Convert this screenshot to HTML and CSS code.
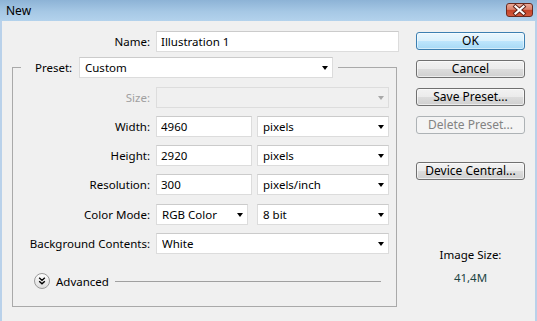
FILE: index.html
```html
<!DOCTYPE html>
<html lang="en">
<head>
    <meta charset="UTF-8">
    <meta name="viewport" content="width=device-width, initial-scale=1.0">
    <title>New</title>
    <link rel="stylesheet" href="styles.css">
</head>
<body>

    <div class="window">
        <div class="titlebar">
            <span class="title">New</span>
            <span class="close">
                <svg width="25" height="12" viewBox="0 0 25 12">
                    <path d="M8.5 2.5 L16.5 9.5 M16.5 2.5 L8.5 9.5" stroke="#5b2218" stroke-width="4" stroke-linecap="square"/>
                    <path d="M8.5 2.5 L16.5 9.5 M16.5 2.5 L8.5 9.5" stroke="#ffffff" stroke-width="2.2" stroke-linecap="square"/>
                </svg>
            </span>
        </div>

        <div class="client">
            <!-- Left side: name + document settings -->
            <div class="main">
                <div class="row name-row">
                    <label class="lbl">Name:</label>
                    <input type="text" class="field w-name" value="Illustration 1">
                </div>

                <fieldset class="group">
                    <legend class="preset">
                        <label class="preset-lbl">Preset:</label>
                        <span class="combo w-preset"><select><option>Custom</option></select></span>
                    </legend>

                    <div class="rows">
                        <div class="row">
                            <label class="lbl disabled">Size:</label>
                            <span class="combo off w-full"><select disabled><option></option></select></span>
                        </div>
                        <div class="row">
                            <label class="lbl">Width:</label>
                            <input type="text" class="field w-num" value="4960">
                            <span class="combo w-unit"><select><option>pixels</option></select></span>
                        </div>
                        <div class="row">
                            <label class="lbl">Height:</label>
                            <input type="text" class="field w-num" value="2920">
                            <span class="combo w-unit"><select><option>pixels</option></select></span>
                        </div>
                        <div class="row">
                            <label class="lbl">Resolution:</label>
                            <input type="text" class="field w-num" value="300">
                            <span class="combo w-unit"><select><option>pixels/inch</option></select></span>
                        </div>
                        <div class="row row-mode">
                            <label class="lbl">Color Mode:</label>
                            <span class="combo w-mode"><select><option>RGB Color</option></select></span>
                            <span class="combo w-unit"><select><option>8 bit</option></select></span>
                        </div>
                        <div class="row">
                            <label class="lbl">Background Contents:</label>
                            <span class="combo w-full"><select><option>White</option></select></span>
                        </div>
                    </div>

                    <div class="advanced">
                        <svg class="adv-icon" width="16" height="16" viewBox="0 0 16 16">
                            <defs>
                                <linearGradient id="advBg" x1="0" y1="0" x2="0" y2="1">
                                    <stop offset="0" stop-color="#ffffff"/>
                                    <stop offset="1" stop-color="#dcdcdc"/>
                                </linearGradient>
                            </defs>
                            <circle cx="8" cy="8" r="7.5" fill="url(#advBg)" stroke="#9a9a9a"/>
                            <path d="M5.2 4.8 L8 7.4 L10.8 4.8 M5.2 8.2 L8 10.8 L10.8 8.2" fill="none" stroke="#000" stroke-width="1.4"/>
                        </svg>
                        <span class="adv-text">Advanced</span>
                        <span class="adv-line"></span>
                    </div>
                </fieldset>
            </div>

            <!-- Right side: buttons + image size -->
            <div class="side">
                <button class="btn btn-default">OK</button>
                <button class="btn">Cancel</button>
                <button class="btn">Save Preset...</button>
                <button class="btn" disabled>Delete Preset...</button>
                <button class="btn btn-gap">Device Central...</button>

                <div class="image-size">
                    <div class="size-lbl">Image Size:</div>
                    <div class="size-val">41,4M</div>
                </div>
            </div>
        </div>
    </div>

</body>
</html>
```

FILE: styles.css
```css
body {
    margin: 0;
    font-family: "Noto Sans", "Open Sans", sans-serif;
    font-size: 11.5px;
    color: #000;
}

.window {
    width: 537px;
    height: 321px;
    overflow: hidden;
    background: #b9d1ea;
}

/* Title bar */
.titlebar {
    height: 21px;
    display: flex;
    justify-content: space-between;
    align-items: flex-start;
    padding: 0 4px 0 6px;
    box-sizing: border-box;
    background: linear-gradient(#8db3d6, #a6c8e5 55%, #b3d2ec);
}

.title {
    line-height: 21px;
    font-size: 12px;
}

.close {
    margin-top: 3px;
    width: 25px;
    height: 12px;
    border: 1px solid #6b2a1f;
    border-radius: 3px;
    background: linear-gradient(#eaa896, #d9806a 45%, #c54429 52%, #d3593d);
    display: flex;
}

/* Dialog body */
.client {
    height: 300px;
    display: flex;
    gap: 17px;
    padding-top: 10px;
    box-sizing: border-box;
    background: #f0f0f0;
    border-left: 2px solid #b9d1ea;
    border-right: 2px solid #b9d1ea;
}

.main {
    width: 397px;
}

.row {
    display: flex;
    align-items: center;
    gap: 6px;
    height: 21px;
}

.lbl {
    width: 137px;
    text-align: right;
    flex-shrink: 0;
    white-space: nowrap;
}

.name-row .lbl {
    width: 148px;
}

.disabled {
    color: #a0a0a0;
}

.field {
    height: 21px;
    box-sizing: border-box;
    border: 1px solid #dcdcdc;
    border-top-color: #cbcbcb;
    background: #fff;
    padding: 0 4px;
    font: inherit;
    color: #000;
    outline: none;
}

.row .field + .combo {
    margin-left: -1px;
}

.w-name { width: 243px; }
.w-num { width: 96px; }
.w-unit { width: 132px; }
.w-mode { width: 92px; }
.w-full { width: 233px; }
.w-preset { width: 254px; }

.row-mode .w-mode + .combo {
    margin-left: 3px;
}

/* Dropdowns */
.combo {
    position: relative;
    display: block;
    height: 21px;
    flex-shrink: 0;
}

.combo select {
    appearance: none;
    -webkit-appearance: none;
    width: 100%;
    height: 21px;
    box-sizing: border-box;
    border: 1px solid #dcdcdc;
    border-top-color: #cbcbcb;
    border-radius: 0;
    background: #fff;
    padding: 0 5px;
    font: inherit;
    color: #000;
    outline: none;
}

.combo::after {
    content: "";
    position: absolute;
    right: 5px;
    top: 9px;
    border-left: 3.5px solid transparent;
    border-right: 3.5px solid transparent;
    border-top: 4px solid #000;
}

.combo.off select {
    background: #f0f0f0;
    border-color: #d6d6d6;
}

.combo.off::after {
    border-top-color: #a8a8a8;
}

/* Group box */
.group {
    margin: 5px 0 0 10px;
    width: 385px;
    box-sizing: border-box;
    padding: 0 0 17px 0;
    border: 1px solid #a9a9a9;
    min-width: 0;
}

.preset {
    display: flex;
    align-items: center;
    gap: 6px;
    margin-left: 8px;
    padding: 0 5px 0 14px;
}

.preset-lbl {
    width: 38px;
    white-space: nowrap;
}

.rows {
    display: flex;
    flex-direction: column;
    gap: 8px;
    margin-top: 9px;
}

.row-mode {
    margin-top: 1px;
}

.advanced {
    display: flex;
    align-items: center;
    height: 16px;
    margin-top: 19px;
    padding-left: 21px;
}

.adv-text {
    margin-left: 6px;
}

.adv-line {
    flex: 1;
    height: 1px;
    background: #a0a0a0;
    margin: 0 15px 0 6px;
}

/* Buttons */
.side {
    width: 109px;
    margin-top: 1px;
    display: flex;
    flex-direction: column;
}

.btn {
    height: 18px;
    margin-bottom: 10px;
    padding: 0;
    border: 1px solid #707070;
    border-radius: 3px;
    background: linear-gradient(#f2f2f2, #ebebeb 50%, #dddddd 50%, #cfcfcf);
    box-shadow: inset 0 0 0 1px rgba(255, 255, 255, 0.6);
    font: inherit;
    font-size: 12px;
    color: #000;
    line-height: 16px;
}

.btn-default {
    border-color: #3c7fb1;
    background: linear-gradient(#eaf6fd, #d9f0fc 50%, #bee6fd 50%, #a7d9f5);
    box-shadow: inset 0 0 0 1px rgba(255, 255, 255, 0.5);
}

.btn:disabled {
    border-color: #adb2b5;
    background: #f4f4f4;
    color: #838383;
    box-shadow: none;
}

.btn-gap {
    margin-top: 18px;
}

.image-size {
    margin-top: 57px;
    text-align: center;
    line-height: 16px;
}

.size-val {
    margin-top: 7px;
    color: #1c4444;
}
```
